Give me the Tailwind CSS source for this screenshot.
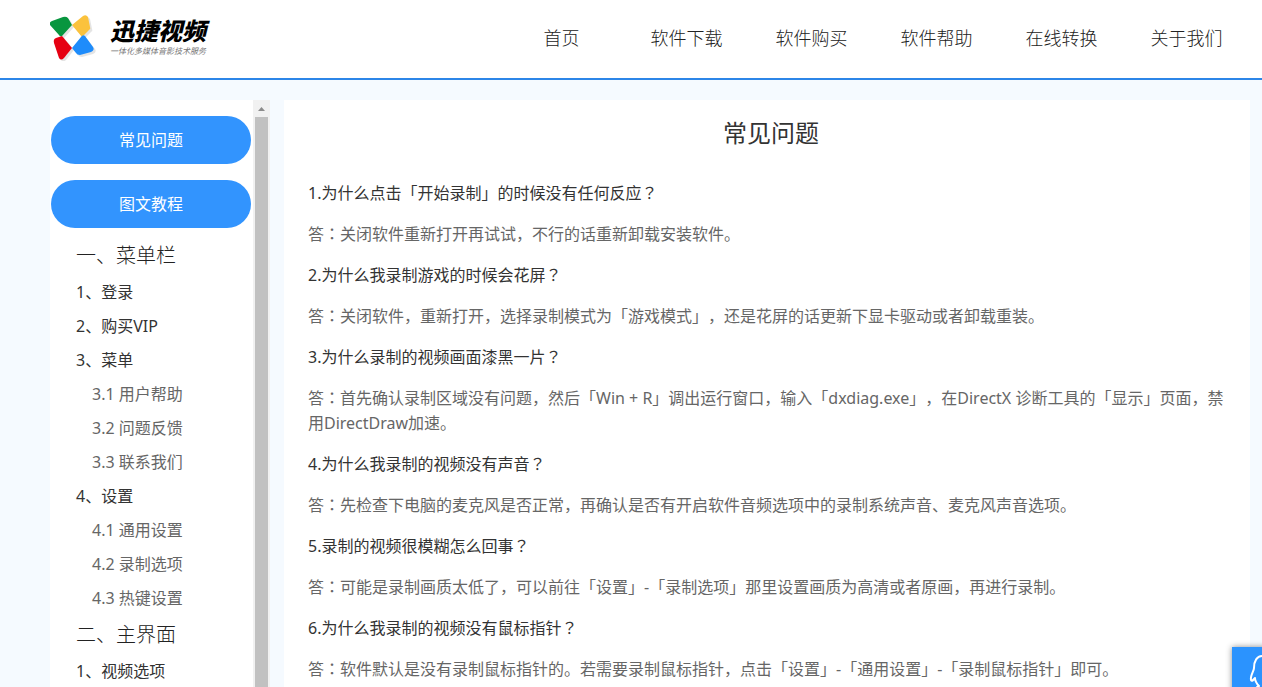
<!DOCTYPE html>
<html lang="zh-CN">
<head>
  <meta charset="UTF-8">
  <meta name="viewport" content="width=device-width, initial-scale=1">
  <title>常见问题 - 迅捷视频</title>
  <script src="https://cdn.jsdelivr.net/npm/@tailwindcss/browser@4"></script>
</head>
<body class="h-screen overflow-hidden flex flex-col bg-[#f5faff] text-base text-[#333] [text-spacing-trim:space-all] font-['Noto_Sans','Noto_Sans_CJK_SC',sans-serif]">

  <header class="shrink-0 bg-white border-b-2 border-[#2c86e8]">
    <div class="h-[78px] ml-[50px] mr-[13px] flex items-center justify-between">
      <a href="#" class="flex items-center gap-3 pb-1">
        <svg class="w-12 h-12" viewBox="0 0 48 48" aria-hidden="true">
          <g fill="#000" opacity=".1" transform="translate(2 2)">
            <path d="M1 12Q0 9 3 8L13 4Q16 3 18 5L22 12L12 23Q10 24 9 22Z"/>
            <path d="M22 12L33 3Q36 1 38 4L40 14Q41 16 39 17L32 24Z"/>
            <path d="M12 23L22 35L14 45Q11 48 9 45L4 30Q3 26 6 25Z"/>
            <path d="M31 25Q33 22 35 24L43 34Q45 37 41 39L30 42Q27 42 26 40L22 35Z"/>
          </g>
          <path fill="#08963f" d="M0 12Q-1 9 2 8L13 4Q16 3 18 5L22 12L12 23Q10 24 9 22Z"/>
          <path fill="#fbc23d" d="M22 12L33 3Q36 1 38 4L40 14Q41 16 39 17L32 24Z"/>
          <path fill="#e60012" d="M12 23L22 35L14 45Q11 48 9 45L4 30Q3 26 6 25Z"/>
          <path fill="#1e8cfb" d="M31 24Q33 21 35 23L43 34Q45 37 41 39L30 42Q27 42 26 40L22 35Z"/>
        </svg>
        <span class="flex flex-col italic whitespace-nowrap">
          <span class="text-2xl leading-7 font-black text-black">迅捷视频</span>
          <span class="text-[8px] leading-3 text-[#777]">一体化多媒体音影技术服务</span>
        </span>
      </a>
      <nav class="pb-0.5 flex text-lg text-center text-[#222] font-light">
        <a href="#" class="w-[125px]">首页</a>
        <a href="#" class="w-[125px]">软件下载</a>
        <a href="#" class="w-[125px]">软件购买</a>
        <a href="#" class="w-[125px]">软件帮助</a>
        <a href="#" class="w-[125px]">在线转换</a>
        <a href="#" class="w-[125px]">关于我们</a>
      </nav>
    </div>
  </header>

  <div class="flex-1 min-h-0 ml-[50px] mr-3 pt-5 flex gap-[14px]">
    <aside class="w-[220px] shrink-0 flex bg-white">
      <div class="flex-1 min-w-0 overflow-hidden">
        <div class="pt-4 px-px flex flex-col gap-4">
          <button type="button" class="w-[200px] h-12 rounded-full bg-[#3294fe] text-white">常见问题</button>
          <button type="button" class="w-[200px] h-12 rounded-full bg-[#3294fe] text-white">图文教程</button>
        </div>
        <ul class="pt-2 pl-[26px] leading-[34px] whitespace-nowrap">
          <li class="text-xl leading-[39px] text-[#222] font-light">一、菜单栏</li>
          <li><a href="#">1、登录</a></li>
          <li><a href="#">2、购买VIP</a></li>
          <li><a href="#">3、菜单</a></li>
          <li class="pl-4 text-[#666]"><a href="#">3.1 用户帮助</a></li>
          <li class="pl-4 text-[#666]"><a href="#">3.2 问题反馈</a></li>
          <li class="pl-4 text-[#666]"><a href="#">3.3 联系我们</a></li>
          <li><a href="#">4、设置</a></li>
          <li class="pl-4 text-[#666]"><a href="#">4.1 通用设置</a></li>
          <li class="pl-4 text-[#666]"><a href="#">4.2 录制选项</a></li>
          <li class="pl-4 text-[#666]"><a href="#">4.3 热键设置</a></li>
          <li class="text-xl leading-[39px] text-[#222] font-light">二、主界面</li>
          <li><a href="#">1、视频选项</a></li>
        </ul>
      </div>
      <!-- scrollbar -->
      <div class="w-[17px] shrink-0 flex flex-col items-center bg-[#f1f1f1]">
        <svg class="w-[17px] h-[17px] shrink-0" viewBox="0 0 17 17" aria-hidden="true"><path fill="#8b8b8b" d="M5 11L8.500 7L12 11Z"/></svg>
        <div class="w-[13px] flex-1 bg-[#c1c1c1]"></div>
      </div>
    </aside>

    <main class="flex-1 min-w-0 overflow-hidden bg-white pl-6 pr-4">
      <h1 class="pt-4 text-2xl leading-[34px] text-center">常见问题</h1>
      <div class="pt-[31px] flex flex-col gap-4 leading-[25px]">
        <p>1.为什么点击「开始录制」的时候没有任何反应<span lang="ja">？</span></p>
        <p class="text-[#666]">答<span lang="ja">：</span>关闭软件重新打开再试试，不行的话重新卸载安装软件。</p>
        <p>2.为什么我录制游戏的时候会花屏<span lang="ja">？</span></p>
        <p class="text-[#666]">答<span lang="ja">：</span>关闭软件，重新打开，选择录制模式为「游戏模式」，还是花屏的话更新下显卡驱动或者卸载重装。</p>
        <p>3.为什么录制的视频画面漆黑一片<span lang="ja">？</span></p>
        <p class="text-[#666]">答<span lang="ja">：</span>首先确认录制区域没有问题，然后「Win + R」调出运行窗口，输入「dxdiag.exe」，在DirectX 诊断工具的「显示」页面，禁用DirectDraw加速。</p>
        <p>4.为什么我录制的视频没有声音<span lang="ja">？</span></p>
        <p class="text-[#666]">答<span lang="ja">：</span>先检查下电脑的麦克风是否正常，再确认是否有开启软件音频选项中的录制系统声音、麦克风声音选项。</p>
        <p>5.录制的视频很模糊怎么回事<span lang="ja">？</span></p>
        <p class="text-[#666]">答<span lang="ja">：</span>可能是录制画质太低了，可以前往「设置」-「录制选项」那里设置画质为高清或者原画，再进行录制。</p>
        <p>6.为什么我录制的视频没有鼠标指针<span lang="ja">？</span></p>
        <p class="text-[#666]">答<span lang="ja">：</span>软件默认是没有录制鼠标指针的。若需要录制鼠标指针，点击「设置」-「通用设置」-「录制鼠标指针」即可。</p>
      </div>
    </main>
  </div>

  <!-- customer service button -->
  <button type="button" aria-label="在线客服" class="fixed -right-[30px] -bottom-5 w-[60px] h-[60px] bg-[#2b93fe] shadow-[0_0_6px_rgba(0,0,0,0.45)]">
    <svg class="w-[60px] h-[60px]" viewBox="0 0 60 60" fill="none" stroke="#fff" stroke-width="2" stroke-linejoin="round" aria-hidden="true">
      <path d="M30 9C25 9 22 14 22 21C22 24 18 29 19 33C20 35 21 33 23 31C23 35 25 37 27 39C24 40 23 43 26 44L34 44C37 43 36 40 33 39C36 37 38 35 38 31C40 34 41 34 41 31C41 27 38 24 38 21C38 14 35 9 30 9Z"/>
    </svg>
  </button>
</body>
</html>
